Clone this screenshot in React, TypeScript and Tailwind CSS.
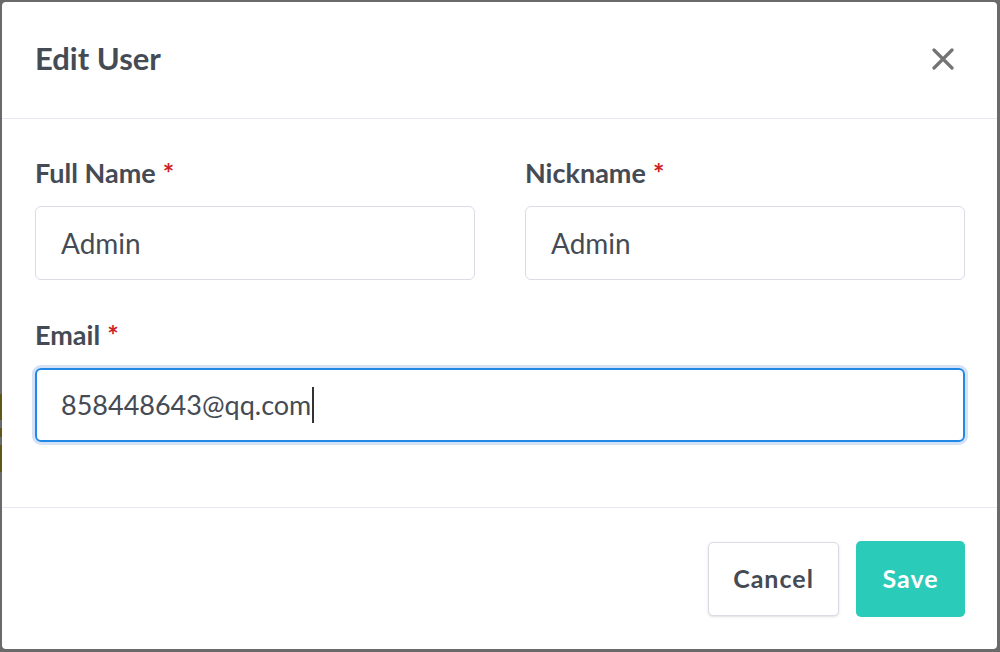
import React from "react";

const font = { fontFamily: "Lato, 'Noto Sans', sans-serif" };

function Label({ text }: { text: string }) {
  return (
    <div className="h-[30px] flex items-center text-[27px] font-bold text-[#454b54] mb-[18px]">
      {text}
      <span className="text-[#cd201f] ml-[7px]">*</span>
    </div>
  );
}

function Field({ label, value }: { label: string; value: string }) {
  return (
    <div className="flex flex-col">
      <Label text={label} />
      <div className="h-[74px] rounded-[6px] border border-[#d9dce7] flex items-center px-[25px] text-[28px] text-[#454b54]">
        {value}
      </div>
    </div>
  );
}

export default function App() {
  return (
    <div className="w-[1000px] h-[652px] bg-[#6a6a6a] flex pt-[2px] pb-[3px] pr-[3px]" style={font}>
      {/* left gutter, a bit of the page behind the modal */}
      <div className="w-[2px] flex flex-col">
        <div className="h-[392px]" />
        <div className="h-[26px] bg-[#5e5718]" />
        <div className="h-[8px]" />
        <div className="h-[9px] bg-[#5e5718]" />
        <div className="h-[8px]" />
        <div className="h-[27px] bg-[#5e5718]" />
      </div>

      <div className="flex-1 bg-white rounded-[4px] flex flex-col">
        {/* Header */}
        <div className="h-[117px] border-b border-[#e8e9f0] flex items-center justify-between pl-[33px] pr-[43px] pb-[3px]">
          <h2 className="text-[31px] font-bold text-[#454b54]">Edit User</h2>
          <svg width="22" height="22" viewBox="0 0 22 22" fill="none" stroke="#747474" strokeWidth="3.2" strokeLinecap="round">
            <path d="M2 2l18 18M20 2L2 20" />
          </svg>
        </div>

        {/* Body */}
        <div className="grid grid-cols-2 gap-x-[50px] pl-[33px] pr-[32px] pt-[39px] pb-[65px] border-b border-[#e8e9f0]">
          <Field label="Full Name" value="Admin" />
          <Field label="Nickname" value="Admin" />
          <div className="col-span-2 flex flex-col mt-[40px]">
            <Label text="Email" />
            <div className="h-[74px] rounded-[6px] border-2 border-[#2188e6] ring-[3px] ring-[#d5e1f5] flex items-center px-[24px] text-[27px] text-[#454b54]">
              858448643@qq.com
              <span className="inline-block w-[2px] h-[36px] bg-[#333] ml-[1px]" />
            </div>
          </div>
        </div>

        {/* Footer */}
        <div className="flex-1 flex items-center justify-end gap-[17px] pr-[32px]">
          <button className="w-[131px] h-[74px] rounded-[5px] border border-[#d9dce7] bg-white shadow-sm text-[25px] font-bold tracking-[1px] text-[#454b54]">
            Cancel
          </button>
          <button className="w-[109px] h-[76px] rounded-[5px] bg-[#2bcbba] text-[25px] font-bold tracking-[1px] text-white">
            Save
          </button>
        </div>
      </div>
    </div>
  );
}
